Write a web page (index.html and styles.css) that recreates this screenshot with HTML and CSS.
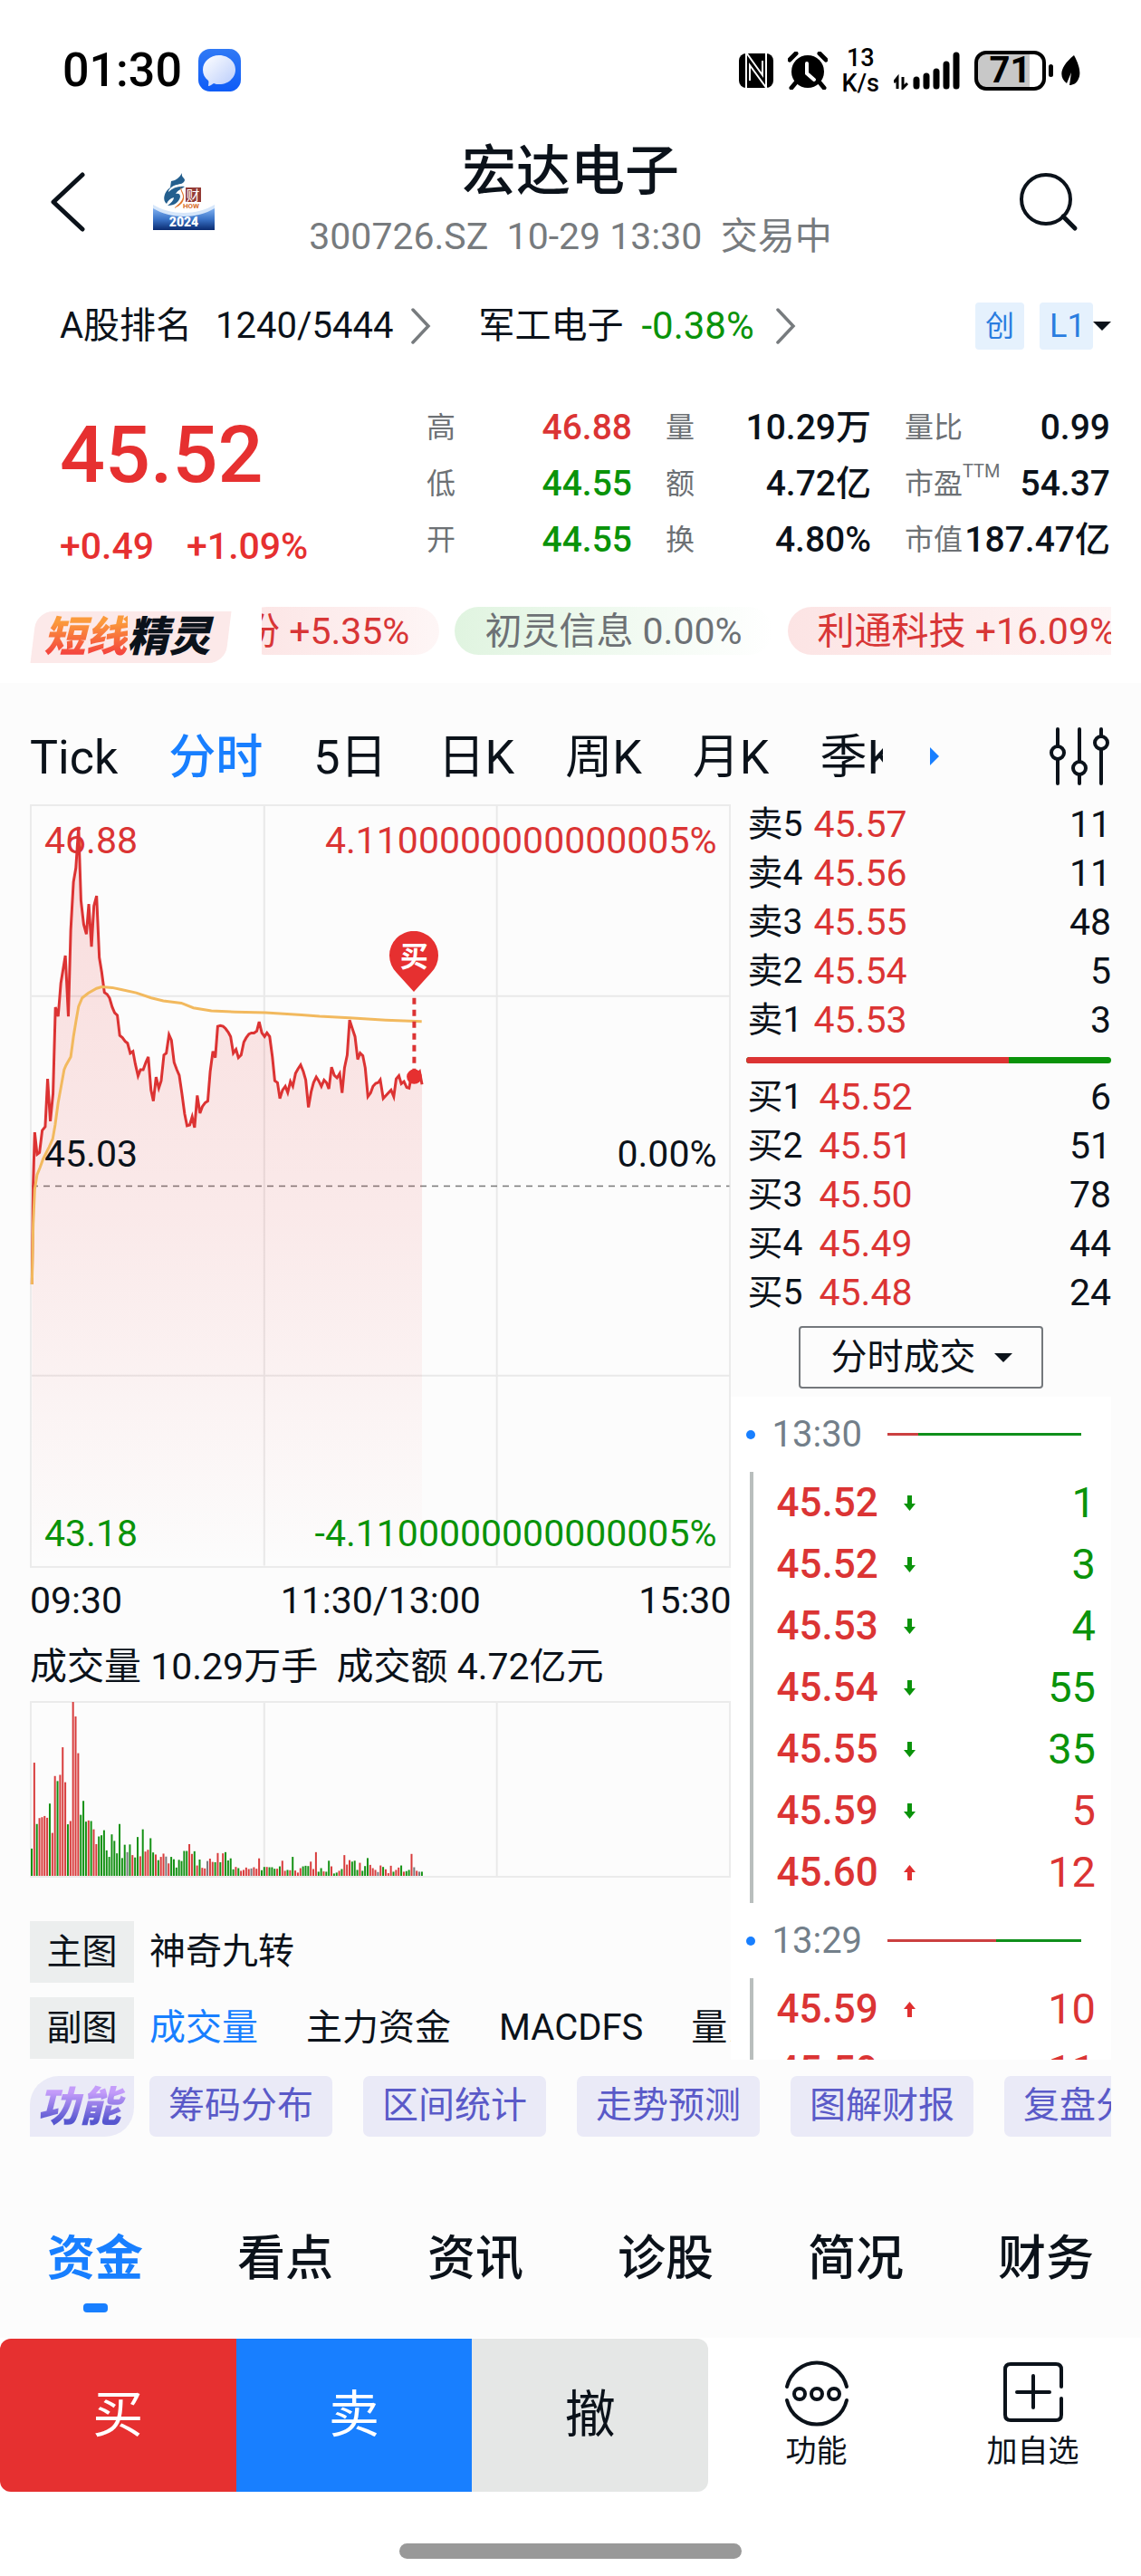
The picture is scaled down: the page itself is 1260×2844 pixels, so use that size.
FILE: index.html
```html
<!doctype html>
<html lang="zh-CN">
<head>
    <meta charset="utf-8">
    <meta name="viewport" content="width=device-width, initial-scale=1">
    <title>宏达电子 300726.SZ</title>
    <link rel="stylesheet" href="styles.css">
</head>
<body>
    <svg class="defs" width="0" height="0" aria-hidden="true">
        <symbol id="down" viewBox="0 0 13 17"><path d="M4 0h5v9h4l-6.500 8L0 9h4z" fill="#0a930a"/></symbol>
        <symbol id="up" viewBox="0 0 13 17"><path d="M4 17h5V8h4L6.500 0 0 8h4z" fill="#e02f2f"/></symbol>
        <symbol id="next" viewBox="0 0 22 40"><path d="M2 2l17 18L2 38" fill="none" stroke="#777b7e" stroke-width="3.500" stroke-linecap="round"/></symbol>
    </svg>

    <div class="status">
        <span class="clock">01:30</span>
        <svg class="msg" width="47" height="47" viewBox="0 0 47 47">
            <defs><linearGradient id="m1" x1="0" y1="0" x2="0" y2="1"><stop offset="0" stop-color="#3079f5"/><stop offset="1" stop-color="#0f5cf7"/></linearGradient>
            <linearGradient id="m2" x1="0" y1="0" x2="1" y2="1"><stop offset="0" stop-color="#fff"/><stop offset="1" stop-color="#b9ccfb"/></linearGradient></defs>
            <rect width="47" height="47" rx="13" fill="url(#m1)"/>
            <path d="M23 7c10 0 18 7 18 16s-8 16-18 16c-2 0-4 0-6-1-2 1-4 3-6 3 0-2 1-4 0-6-4-3-6-7-6-12C5 14 13 7 23 7z" fill="url(#m2)"/>
        </svg>
        <div class="icons">
            <svg width="38" height="40" viewBox="0 0 38 40">
                <rect x="0" y="1" width="38" height="38" rx="8"/>
                <path d="M8 0l18 25V9M12 31V14l19 26M8 0v40M30 0v40" stroke="#fff" stroke-width="2" fill="none"/>
            </svg>
            <svg width="44" height="42" viewBox="0 0 44 42">
                <circle cx="22" cy="22" r="18"/>
                <path d="M2 9l7-7M42 9l-7-7M9 34l-5 6M35 34l5 6" stroke="#000" stroke-width="5" stroke-linecap="round"/>
                <path d="M21 13v11l8 7" stroke="#fff" stroke-width="4" fill="none" stroke-linecap="round"/>
            </svg>
            <span class="speed">13<br>K/s</span>
            <svg width="73" height="42" viewBox="0 0 73 42">
                <path d="M4 41V29l-4 5M10 28v12l5-5" stroke="#000" stroke-width="3" fill="none"/>
                <path d="M25 31v7M36 27v11M47 22v16M58 14v24M69 4v34" stroke="#000" stroke-width="7" stroke-linecap="round"/>
            </svg>
            <span class="battery"><b>71</b></span>
            <svg width="22" height="34" viewBox="0 0 22 34">
                <path d="M15 0c6 11 8 20 5 26-2 5-6 7-10 7l2-14-5 12C-2 24-1 13 15 0z"/>
            </svg>
        </div>
    </div>

    <header class="head">
        <div class="head-left">
            <button class="plain" aria-label="返回">
                <svg width="40" height="66" viewBox="0 0 40 66"><path d="M36 3L4 33l32 30" fill="none" stroke="#0b121a" stroke-width="5" stroke-linecap="round" stroke-linejoin="round"/></svg>
            </button>
            <svg class="logo" width="68" height="64" viewBox="0 0 68 64">
                <defs><linearGradient id="lg" x1="0" y1="0" x2="0" y2="1"><stop offset="0" stop-color="#7fb0f0"/><stop offset=".5" stop-color="#3b74c8"/><stop offset="1" stop-color="#0a2b70"/></linearGradient></defs>
                <path d="M0 36c20 12 48 12 68 0v28H0z" fill="#d6e6fa"/>
                <path d="M0 40c20 12 48 12 68 0v24H0z" fill="url(#lg)"/>
                <path d="M20 10c6-1 9-4 12-9-1 5 3 5 3 8-1 4-5 4-9 5-5 1-9 5-9 8 5-5 12-7 18-6-4 3-8 4-10 8 3-1 5 0 5 3-1 6-6 10-14 10 4-3 7-6 7-9-4 1-7 4-8 7-5-4-3-13 4-18z" fill="#245f8e"/>
                <path d="M31 16c-2 4 2 7 2 11 0 5-6 9-10 13 8-3 12-8 11-14 0-3-3-5-3-10z" fill="#e2762d"/>
                <rect x="36" y="17" width="17" height="16" fill="#933a35"/>
                <text x="44" y="31" class="logo-cai">财</text>
                <text x="42" y="40" class="logo-how">HOW</text>
                <text x="34" y="60" class="logo-year">2024</text>
            </svg>
        </div>
        <div class="head-title">
            <h1>宏达电子</h1>
            <p>300726.SZ&nbsp; 10-29 13:30&nbsp; 交易中</p>
        </div>
        <div class="head-right">
            <button class="plain" aria-label="搜索">
                <svg width="66" height="66" viewBox="0 0 66 66"><circle cx="30" cy="30" r="27" fill="none" stroke="#0b121a" stroke-width="4"/><path d="M49 49l13 13" stroke="#0b121a" stroke-width="5" stroke-linecap="round"/></svg>
            </button>
        </div>
    </header>

    <div class="rank">
        <a href="#"><span>A股排名</span><span class="rank-num">1240/5444</span><svg width="22" height="40"><use href="#next"/></svg></a>
        <a href="#" class="sector"><span>军工电子</span><span class="rank-pct green">-0.38%</span><svg width="22" height="40"><use href="#next"/></svg></a>
        <div class="tags">
            <span class="tag">创</span>
            <select class="tag level" aria-label="行情级别"><option>L1</option></select>
            <i class="caret"></i>
        </div>
    </div>

    <section class="quote">
        <div class="last">
            <strong>45.52</strong>
            <div class="change"><span>+0.49</span><span>+1.09%</span></div>
        </div>
        <dl class="stats">
            <div><dt>高</dt><dd class="red">46.88</dd></div>
            <div><dt>量</dt><dd>10.29万</dd></div>
            <div><dt>量比</dt><dd>0.99</dd></div>
            <div><dt>低</dt><dd class="green">44.55</dd></div>
            <div><dt>额</dt><dd>4.72亿</dd></div>
            <div><dt>市盈<sup>TTM</sup></dt><dd>54.37</dd></div>
            <div><dt>开</dt><dd class="green">44.55</dd></div>
            <div><dt>换</dt><dd>4.80%</dd></div>
            <div><dt>市值</dt><dd>187.47亿</dd></div>
        </dl>
    </section>

    <div class="spirit">
        <div class="spirit-logo"><span><em>短线</em>精灵</span></div>
        <div class="spirit-list">
            <a href="#" class="pill up first">份 +5.35%</a>
            <a href="#" class="pill flat">初灵信息 0.00%</a>
            <a href="#" class="pill up">利通科技 +16.09%</a>
        </div>
    </div>

    <main>
        <div class="period">
            <nav>
                <a href="#">Tick</a>
                <a href="#" class="on">分时</a>
                <a href="#">5日</a>
                <a href="#">日K</a>
                <a href="#">周K</a>
                <a href="#">月K</a>
                <a href="#">季K</a>
            </nav>
            <i class="more"></i>
            <button class="plain" aria-label="设置">
                <svg width="66" height="66" viewBox="0 0 66 66" fill="none" stroke="#0b121a" stroke-width="4" stroke-linecap="round">
                    <path d="M9 3v18M9 37v26M33 3v35M33 54v9M57 3v7M57 26v37"/>
                    <circle cx="9" cy="29" r="7"/><circle cx="33" cy="46" r="7"/><circle cx="57" cy="18" r="7"/>
                </svg>
            </button>
        </div>

        <div class="board">
            <div class="left">
                <div class="chart">
                    <svg viewBox="102 264 2322 2063" preserveAspectRatio="none">
                        <defs><linearGradient id="fill" x1="0" y1="264" x2="0" y2="2327" gradientUnits="userSpaceOnUse"><stop offset="0" stop-color="#e63030" stop-opacity=".16"/><stop offset=".55" stop-color="#e63030" stop-opacity=".09"/><stop offset="1" stop-color="#e63030" stop-opacity="0"/></linearGradient></defs>
                        <path class="grid" d="M876 264V2327M1650 264V2327M102 780H2424M102 1811H2424"/>
                        <path class="base" d="M102 1296H2424"/>
                        <path id="area" fill="url(#fill)"/>
                        <polyline id="price"/>
                        <polyline class="avg" points="103,1563 107,1400 112,1305 120,1265 130,1245 140,1222 160,1190 172,1168 180,1130 190,1070 200,1025 210,980 216,968 232,945 241,890 250,845 258,808 270,785 290,772 318,759 335,755 370,757 400,762 450,771 500,785 540,793 600,799 640,812 700,820 780,823 880,825 1000,831 1060,835 1160,839 1280,845 1400,849"/>
                        <path class="drop" d="M1375 785V980"/>
                        <ellipse cx="1375" cy="999" rx="25" ry="20" fill="#e63030"/>
                    </svg>
                    <span class="lab top red">46.88</span>
                    <span class="lab top end red">4.1100000000000005%</span>
                    <span class="lab mid">45.03</span>
                    <span class="lab mid end">0.00%</span>
                    <span class="lab bottom green">43.18</span>
                    <span class="lab bottom end green">-4.1100000000000005%</span>
                    <span class="pin">
                        <svg width="54" height="67" viewBox="0 0 54 67"><path d="M27 67L8 46A27 27 0 1 1 46 46z" fill="#e63030"/></svg>
                        <b>买</b>
                    </span>
                </div>
                <div class="axis"><span>09:30</span><span>11:30/13:00</span><span>15:30</span></div>
                <p class="vol-text">成交量 10.29万手&nbsp; 成交额 4.72亿元</p>
                <div class="vol">
                    <svg id="vol" viewBox="102 651 2322 584" preserveAspectRatio="none"><path class="grid" d="M876 651V1235M1650 651V1235"/></svg>
                </div>
                <div class="opt">
                    <span class="opt-name">主图</span>
                    <nav><a href="#">神奇九转</a></nav>
                </div>
                <div class="opt">
                    <span class="opt-name">副图</span>
                    <nav><a href="#" class="on">成交量</a><a href="#">主力资金</a><a href="#">MACDFS</a><a href="#">量比</a></nav>
                </div>
            </div>

            <div class="right">
                <table class="book">
                    <tr><th>卖5</th><td>45.57</td><td>11</td></tr>
                    <tr><th>卖4</th><td>45.56</td><td>11</td></tr>
                    <tr><th>卖3</th><td>45.55</td><td>48</td></tr>
                    <tr><th>卖2</th><td>45.54</td><td>5</td></tr>
                    <tr><th>卖1</th><td>45.53</td><td>3</td></tr>
                </table>
                <div class="ratio"><i style="width:72%"></i></div>
                <table class="book buy">
                    <tr><th>买1</th><td>45.52</td><td>6</td></tr>
                    <tr><th>买2</th><td>45.51</td><td>51</td></tr>
                    <tr><th>买3</th><td>45.50</td><td>78</td></tr>
                    <tr><th>买4</th><td>45.49</td><td>44</td></tr>
                    <tr><th>买5</th><td>45.48</td><td>24</td></tr>
                </table>
                <div class="mode">
                    <select aria-label="成交类型"><option>分时成交</option></select>
                    <i class="caret"></i>
                </div>
                <div class="ticks">
                    <div class="minute"><i class="dot"></i><span>13:30</span><div class="power"><i style="width:16%"></i></div></div>
                    <table>
                        <tr><td>45.52</td><td><svg width="13" height="17"><use href="#down"/></svg></td><td class="green">1</td></tr>
                        <tr><td>45.52</td><td><svg width="13" height="17"><use href="#down"/></svg></td><td class="green">3</td></tr>
                        <tr><td>45.53</td><td><svg width="13" height="17"><use href="#down"/></svg></td><td class="green">4</td></tr>
                        <tr><td>45.54</td><td><svg width="13" height="17"><use href="#down"/></svg></td><td class="green">55</td></tr>
                        <tr><td>45.55</td><td><svg width="13" height="17"><use href="#down"/></svg></td><td class="green">35</td></tr>
                        <tr><td>45.59</td><td><svg width="13" height="17"><use href="#down"/></svg></td><td>5</td></tr>
                        <tr><td>45.60</td><td><svg width="13" height="17"><use href="#up"/></svg></td><td>12</td></tr>
                    </table>
                    <div class="minute"><i class="dot"></i><span>13:29</span><div class="power"><i style="width:56%"></i></div></div>
                    <table>
                        <tr><td>45.59</td><td><svg width="13" height="17"><use href="#up"/></svg></td><td>10</td></tr>
                        <tr><td>45.59</td><td></td><td>11</td></tr>
                    </table>
                </div>
            </div>
        </div>

        <div class="func">
            <div class="func-logo"><span>功能</span></div>
            <div class="func-list">
                <button>筹码分布</button>
                <button>区间统计</button>
                <button>走势预测</button>
                <button>图解财报</button>
                <button>复盘分析</button>
            </div>
        </div>

        <nav class="info">
            <a href="#" class="on">资金</a>
            <a href="#">看点</a>
            <a href="#">资讯</a>
            <a href="#">诊股</a>
            <a href="#">简况</a>
            <a href="#">财务</a>
        </nav>
    </main>

    <footer>
        <div class="trade">
            <button class="buy-btn">买</button>
            <button class="sell-btn">卖</button>
            <button class="cancel-btn">撤</button>
            <button class="tool">
                <svg width="72" height="76" viewBox="0 0 72 76" fill="none" stroke="#0b121a" stroke-width="4" stroke-linecap="round">
                    <path d="M3 31a34 35 0 0 1 66 0M3 46a34 35 0 0 0 66 0"/>
                    <circle cx="17" cy="39" r="6"/><circle cx="36" cy="39" r="6"/><circle cx="55" cy="39" r="6"/>
                </svg>
                功能
            </button>
            <button class="tool">
                <svg width="72" height="76" viewBox="0 0 72 76" fill="none" stroke="#0b121a" stroke-width="4" stroke-linecap="round">
                    <path d="M67 31V12q0-6-6-6H11Q5 6 5 12v50q0 6 6 6h50q6 0 6-6V44M36 19v35M18 37h36"/>
                </svg>
                加自选
            </button>
        </div>
        <div class="home"></div>
    </footer>

    <script>
        // 分时价格
        var pts = "103,1563 107,1290 112,1150 120,1210 128,1205 137,1145 147,1135 155,1005 164,1120 173,1045 181,810 190,835 199,745 207,705 214,670 224,835 232,600 241,470 249,432 258,320 266,520 275,585 284,612 292,530 301,646 309,535 318,508 327,675 335,715 344,770 353,775 361,785 370,810 378,825 387,832 395,887 404,893 413,903 421,908 430,935 439,930 447,965 456,997 464,980 473,980 482,960 490,945 499,1035 507,1065 516,1000 525,1030 533,1010 542,940 550,935 559,885 567,900 576,960 585,980 593,995 602,1045 611,1100 619,1132 628,1130 636,1108 644,1137 653,1050 662,1098 670,1080 679,1070 688,1065 696,985 705,930 713,947 721,862 730,860 739,862 747,868 756,878 764,890 773,935 782,925 790,947 799,940 808,905 816,893 825,883 833,880 842,880 851,875 859,850 868,880 877,890 885,880 894,890 903,945 911,1010 920,1015 928,1058 937,1035 946,1025 954,1042 963,1012 971,1025 980,990 988,978 997,967 1006,985 1014,1008 1023,1082 1032,1040 1040,1015 1049,1000 1057,1010 1066,1025 1075,1008 1083,1015 1091,1032 1100,973 1109,995 1118,1002 1127,990 1135,1043 1143,975 1152,940 1160,845 1169,868 1178,890 1187,952 1195,935 1204,942 1212,975 1221,1053 1230,1043 1238,1025 1247,1017 1255,1015 1262,1007 1272,1058 1281,1050 1290,1042 1298,1035 1307,1053 1315,1005 1324,996 1332,1018 1341,1012 1350,1028 1358,1030 1365,1000 1375,1000 1393,985 1401,1020";
        document.getElementById("price").setAttribute("points", pts);
        document.getElementById("area").setAttribute("d", "M103,2327 L" + pts + " L1401,2327z");

        // 每分钟成交量 r涨 g跌 n平
        var vol = "92g 382r 175g 195r 198r 202r 196r 244g 145r 337r 320g 341r 434r 316r 174g 185r 587r 538r 414r 206g 253g 183g 187r 185g 157r 107r 133g 137g 154g 86g 64g 140g 118g 76g 175g 60g 105g 80n 106g 70r 62g 131g 66r 157g 82r 88r 127g 79g 72r 53g 64r 75r 65n 42r 64g 56g 28g 54g 50g 84g 84g 107r 74r 83g 35r 55g 27r 25r 50n 58r 47r 46g 77r 46g 76r 80g 52g 59g 22g 30r 26g 17r 20r 28r 23r 25n 29r 24r 59r 19g 30g 30r 29g 29g 24g 24r 32g 51r 17r 20g 19r 64g 18r 11r 26r 32g 34g 33g 48r 23r 80r 14g 26g 15r 14g 51g 32r 8g 11g 17r 23g 70r 38r 53r 48g 51g 20g 44r 17g 33g 60g 37r 26r 20r 13n 35r 30g 22r 9r 34r 14g 20r 28r 35g 14r 16g 20g 74r 29n 17r 14n 14g".split(" ");
        var color = { r: "#d83c3c", g: "#149114", n: "#777b7e" };
        var svg = document.getElementById("vol");
        for (var i = 0; i < vol.length; i++) {
            var h = parseInt(vol[i]);
            var bar = document.createElementNS("http://www.w3.org/2000/svg", "rect");
            bar.setAttribute("x", 99 + i * 8.6);
            bar.setAttribute("y", 1235 - h);
            bar.setAttribute("width", 6);
            bar.setAttribute("height", h);
            bar.setAttribute("fill", color[vol[i].slice(-1)]);
            svg.appendChild(bar);
        }
    </script>
</body>
</html>
```
FILE: styles.css
```css
*{ padding:0; margin:0; box-sizing:border-box; }
body
{
    background:#fff;
    color:#0b121a;
    font-family:Roboto, "Noto Sans CJK SC", sans-serif;
    font-size:40px;
    line-height:54px;
}
a
{
    color:inherit;
    text-decoration:none;
    white-space:nowrap;
}
button, select
{
    font:inherit;
    color:inherit;
    border:0;
    background:none;
    appearance:none;
}
svg
{
    display:block;
    flex:none;
}
.defs{ position:absolute; }
.red{ color:#db3434; }
.green{ color:#0a930a; }
.plain{ display:block; }
.caret
{
    border:10px solid transparent;
    border-top-color:#0b121a;
    border-bottom:0;
    pointer-events:none;
}

/* 状态栏 */
.status
{
    display:flex;
    align-items:center;
    height:150px;
    padding:5px 67px 0 69px;
    color:#000;
}
.clock
{
    font-size:52px;
    font-weight:500;
}
.msg{ margin-left:18px; }
.icons
{
    display:flex;
    align-items:center;
    gap:16px;
    margin-left:auto;
}
.speed
{
    font-size:27px;
    font-weight:500;
    line-height:28px;
    text-align:center;
}
.battery
{
    position:relative;
    width:79px;
    height:44px;
    border:4px solid #000;
    border-radius:13px;
    background:linear-gradient(90deg, #c8c8c8 80%, #fff 80%);
    font-size:40px;
    line-height:36px;
    text-align:center;
}
.battery:after
{
    content:"";
    position:absolute;
    right:-12px;
    top:11px;
    width:5px;
    height:14px;
    border-radius:3px;
    background:#000;
}

/* 标题 */
.head
{
    display:grid;
    grid-template-columns:1fr auto 1fr;
    align-items:center;
    padding:0 55px;
}
.head-left
{
    display:flex;
    gap:74px;
}
.head-right
{
    display:flex;
    justify-content:flex-end;
    padding-right:14px;
}
.head-title{ text-align:center; }
h1
{
    font-size:60px;
    font-weight:500;
    line-height:80px;
}
.head-title p
{
    font-size:41px;
    line-height:62px;
    padding-bottom:4px;
    color:#777b7e;
}
.logo text{ text-anchor:middle; }
.logo-cai{ font-size:15px; fill:#fff; }
.logo-how{ font-size:8px; font-weight:700; fill:#d8702c; }
.logo-year{ font-size:14px; font-weight:900; fill:#fff; }

.rank
{
    display:flex;
    align-items:center;
    height:128px;
    padding:0 33px 0 66px;
}
.rank a
{
    display:flex;
    align-items:center;
}
.rank-num{ margin:0 20px 0 26px; }
.rank-pct
{
    margin:0 24px 0 20px;
    font-size:42px;
}
.sector{ margin-left:52px; }
.tags
{
    display:flex;
    align-items:center;
    margin-left:auto;
}
.tag
{
    height:52px;
    padding:0 11px;
    border-radius:4px;
    background:#e5f1fd;
    color:#2a7de0;
    font-size:32px;
    line-height:52px;
}
.level
{
    width:59px;
    margin-left:17px;
    font-size:36px;
}

/* 报价 */
.quote
{
    display:flex;
    justify-content:space-between;
    padding:17px 34px 0 66px;
}
.last{ color:#e63030; }
.last strong
{
    display:block;
    font-size:88px;
    font-weight:500;
    line-height:122px;
}
.change
{
    display:flex;
    gap:36px;
    font-size:41px;
    font-weight:500;
    line-height:80px;
}
.stats
{
    display:grid;
    grid-template-columns:repeat(3, 227px);
    column-gap:37px;
    height:186px;
    line-height:62px;
}
.stats div
{
    display:flex;
    justify-content:space-between;
}
dt
{
    position:relative;
    font-size:32px;
    color:#6d7175;
}
dt sup
{
    position:absolute;
    left:100%;
    top:-14px;
    font-size:20px;
}
dd
{
    font-size:39px;
    font-weight:500;
}

/* 短线精灵 */
.spirit
{
    display:flex;
    align-items:flex-end;
    padding:27px 33px 22px;
}
.spirit-logo
{
    flex:none;
    width:223px;
    height:57px;
    margin-right:33px;
    position:relative;
    text-align:center;
    font-size:46px;
    font-weight:900;
    font-style:italic;
    line-height:57px;
}
.spirit-logo:before
{
    content:"";
    position:absolute;
    left:4px;
    right:4px;
    top:0;
    bottom:0;
    border-radius:18px 0;
    background:#fce9e9;
    transform:skewX(-7deg);
}
.spirit-logo span
{
    position:relative;
    padding-right:8px;
}
.spirit-logo em
{
    background:linear-gradient(#fb9a3c 20%, #f4443e 85%);
    background-clip:text;
    -webkit-background-clip:text;
    color:transparent;
}
.spirit-list
{
    flex:1;
    min-width:0;
    display:flex;
    gap:17px;
    height:62px;
    overflow:hidden;
}
.pill
{
    flex:none;
    height:53px;
    padding:0 33px;
    border-radius:27px;
    font-size:41px;
}
.pill.first
{
    margin-left:-21px;
    padding-left:0;
}
.pill.up
{
    color:#d83636;
    background:linear-gradient(90deg, #fce4e4, #fef6f6);
}
.pill.flat
{
    color:#6d7175;
    background:linear-gradient(90deg, #e0f4e0, #fff);
}

main
{
    background:#fcfcfc;
    overflow:hidden;
}
.period
{
    display:flex;
    align-items:center;
    height:129px;
    padding:33px 35px 0 33px;
    font-size:52px;
}
.period nav
{
    display:flex;
    gap:56px;
    flex:0 1 942px;
    min-width:0;
    overflow:hidden;
    padding-top:4px;
    line-height:80px;
}
.period .on, .opt .on{ color:#187fff; }
.period .on{ font-weight:500; }
.more
{
    margin-left:52px;
    border:10px solid transparent;
    border-left-color:#187fff;
    border-right:0;
}
.period button{ margin-left:auto; }

.board
{
    display:grid;
    grid-template-columns:minmax(0, 24fr) minmax(0, 13fr);
    padding:0 33px;
}
.left{ padding-top:5px; }
.chart, .vol
{
    position:relative;
    border:2px solid #ebebeb;
}
.chart{ aspect-ratio:774 / 842; }
.chart > svg, .vol > svg
{
    width:100%;
    height:100%;
    overflow:visible;
}
.chart path, .chart polyline, .vol path{ vector-effect:non-scaling-stroke; }
.grid
{
    stroke:#e4e4e4;
    stroke-opacity:.8;
    stroke-width:2;
}
.base
{
    stroke:#777;
    stroke-width:1.5;
    stroke-dasharray:7 6;
}
#price, .avg
{
    fill:none;
    stroke:#dc3333;
    stroke-width:3;
}
.avg{ stroke:#f2b95e; }
.drop
{
    stroke:#dc3333;
    stroke-width:4;
    stroke-dasharray:7 6;
}
.lab
{
    position:absolute;
    left:14px;
    font-size:41px;
}
.lab.end
{
    left:auto;
    right:14px;
}
.lab.top{ top:11px; }
.lab.mid{ bottom:51%; }
.lab.bottom{ bottom:9px; }
.pin
{
    position:absolute;
    left:54.8%;
    top:16.5%;
    width:54px;
    margin-left:-27px;
    color:#fff;
}
.pin b
{
    position:absolute;
    left:0;
    right:0;
    top:0;
    font-size:31px;
    line-height:58px;
    text-align:center;
}
.axis
{
    display:flex;
    justify-content:space-between;
    font-size:41px;
    line-height:72px;
}
.vol-text
{
    font-size:41px;
    line-height:75px;
    white-space:nowrap;
}
.vol
{
    height:195px;
    margin-bottom:48px;
}
.opt
{
    display:flex;
    align-items:center;
    height:68px;
    margin-bottom:16px;
}
.opt-name
{
    flex:none;
    width:115px;
    background:#eceeee;
    font-size:39px;
    line-height:68px;
    text-align:center;
}
.opt nav
{
    flex:1;
    min-width:0;
    display:flex;
    gap:53px;
    margin-left:17px;
    overflow:hidden;
}

/* 盘口 */
table
{
    width:100%;
    border-collapse:collapse;
}
.book
{
    width:calc(100% - 18px);
    margin-left:18px;
    font-size:41px;
    line-height:54px;
}
.book th
{
    width:73px;
    font-size:39px;
    font-weight:400;
    text-align:left;
    white-space:nowrap;
}
.book.buy th{ width:79px; }
.book td{ color:#db3434; }
.book td:last-child
{
    color:#0b121a;
    text-align:right;
}
.ratio
{
    height:7px;
    margin:14px 0 10px 17px;
    border-radius:4px;
    background:#0a930a;
    overflow:hidden;
}
.ratio i
{
    display:block;
    height:100%;
    background:#dc3333;
}
.mode
{
    position:relative;
    width:270px;
    margin:10px 0 9px 75px;
}
.mode select
{
    display:block;
    width:100%;
    height:69px;
    padding-left:33px;
    border:2px solid #74787c;
    border-radius:4px;
}
.mode .caret
{
    position:absolute;
    right:34px;
    top:30px;
}
.ticks
{
    max-height:732px;
    overflow:hidden;
    background:#fff;
}
.minute
{
    display:flex;
    align-items:center;
    height:83px;
    padding:0 33px 0 17px;
    color:#737f8a;
}
.dot
{
    width:10px;
    height:10px;
    margin-right:18px;
    border-radius:50%;
    background:#187fff;
}
.power
{
    flex:1;
    height:3px;
    margin-left:28px;
    background:#0f8f1b;
}
.power i
{
    display:block;
    height:100%;
    background:#cb4040;
}
.ticks table
{
    width:calc(100% - 21px);
    margin-left:21px;
    border-left:4px solid #b9bebd;
    color:#db3434;
    font-size:47px;
    line-height:68px;
}
.ticks td:first-child
{
    width:168px;
    padding-left:25px;
    font-size:44px;
    font-weight:500;
}
.ticks td:last-child
{
    padding-right:17px;
    text-align:right;
}

/* 功能 */
.func
{
    display:flex;
    padding:3px 33px 0;
}
.func-logo
{
    flex:none;
    width:115px;
    height:67px;
    margin-right:17px;
    border-radius:32px 0;
    background:#eaeaf7;
    font-size:46px;
    font-weight:900;
    font-style:italic;
    line-height:69px;
    text-align:center;
}
.func-logo span
{
    padding-right:6px;
    background:linear-gradient(#c49cfa 20%, #5656cf 80%);
    background-clip:text;
    -webkit-background-clip:text;
    color:transparent;
}
.func-list
{
    flex:1;
    min-width:0;
    display:flex;
    gap:34px;
    overflow:hidden;
}
.func-list button
{
    flex:none;
    width:202px;
    height:67px;
    border-radius:7px;
    background:#eaeaf7;
    color:#5a5ac8;
}

.info
{
    display:grid;
    grid-template-columns:repeat(6, 1fr);
    padding:99px 0 28px;
    font-size:53px;
    line-height:72px;
    text-align:center;
}
.info a{ font-weight:500; }
.info .on
{
    color:#187fff;
    font-weight:700;
}
.info .on:after
{
    content:"";
    display:block;
    width:27px;
    height:10px;
    margin:13px auto 0;
    border-radius:4px;
    background:#187fff;
}

/* 底部 */
footer{ padding:1px 0 20px; }
.trade
{
    display:grid;
    grid-template-columns:repeat(3, 12fr) repeat(2, 11fr);
}
.trade button
{
    height:169px;
    font-size:56px;
}
.buy-btn
{
    border-radius:12px 0 0 12px;
    background:#e63030;
    color:#fff;
}
.sell-btn
{
    background:#187fff;
    color:#fff;
}
.cancel-btn
{
    border-radius:0 12px 12px 0;
    background:#e5e7e6;
}
.trade .tool
{
    font-size:34px;
    line-height:44px;
}
.tool svg{ margin:0 auto 4px; }
.home
{
    width:30%;
    height:17px;
    margin:57px auto 0;
    border-radius:9px;
    background:#999;
}
```
